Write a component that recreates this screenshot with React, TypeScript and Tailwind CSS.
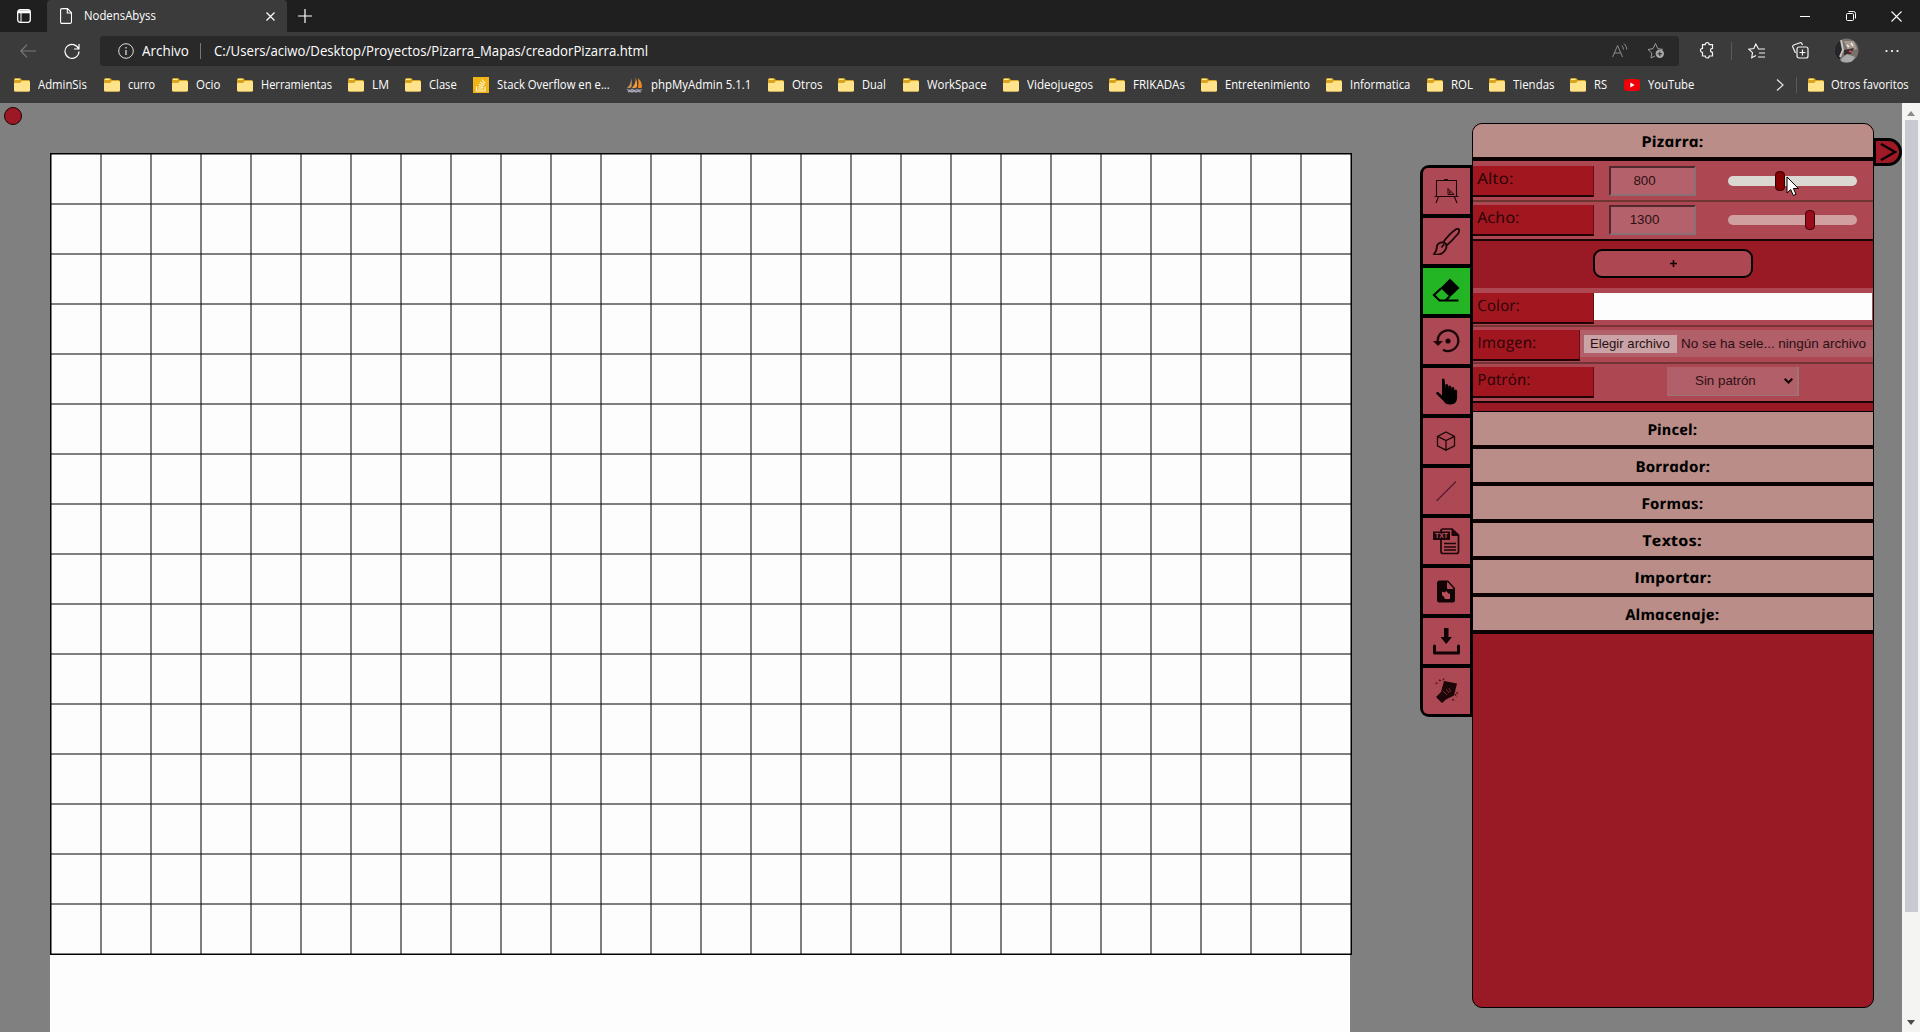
import { useLayoutEffect, useRef, useState } from "react";
import type { ReactNode } from "react";

/* Text line squeezed or stretched to a given width */
function Fit({ w, upright, children }: { w: number; upright?: boolean; children: ReactNode }) {
  const ref = useRef<HTMLSpanElement>(null);
  const [scale, setScale] = useState(1);
  useLayoutEffect(() => {
    if (ref.current) setScale(w / ref.current.offsetWidth);
  }, [w]);
  return (
    <span className="inline-flex shrink-0 whitespace-nowrap" style={{ width: w }}>
      <span
        ref={ref}
        className="inline-block origin-left shrink-0"
        style={{ transform: `scaleX(${scale})${upright ? " skewX(11deg)" : ""}` }}
      >
        {children}
      </span>
    </span>
  );
}

const Folder = () => (
  <svg className="shrink-0" width="16" height="16" viewBox="0 0 16 16">
    <path d="M0 2.500Q0 1 1.500 1H6l2 2h6.500Q16 3 16 4.500V13q0 1.500-1.500 1.500h-13Q0 14.500 0 13z" fill="#d9a520" />
    <path d="M0 6h6l2-2h6.500Q16 4 16 5.500V13q0 1.500-1.500 1.500h-13Q0 14.500 0 13z" fill="#ffe38a" />
    <path d="M1 2.500h4.500" stroke="#fff0a0" />
  </svg>
);
const Stack = () => (
  <svg className="shrink-0" width="16" height="16" viewBox="0 0 16 16">
    <rect width="16" height="16" fill="#f0b416" />
    <path d="M3.500 9.500v4.500h8.500V9.500M5.200 12h5M5.300 9.800l5 .6M5.800 7.400l4.800 1.300M7 5l4.400 2.500M8.800 2.500l3.400 3.700" stroke="#fff6d8" strokeWidth="1.100" fill="none" />
  </svg>
);
const Sails = () => (
  <svg className="shrink-0" width="17" height="16" viewBox="0 0 17 16">
    <path d="M5 1Q5.500 7 1 11q3 .5 4.500-1Q6.500 5 5 1z" fill="#c9955e" />
    <path d="M9.500 0Q10.500 6 6 11q4 .5 5-1 .5-6-1.500-10z" fill="#f39a3c" />
    <path d="M12 1q5 5 3.500 10h-3.500q1-5 0-10z" fill="#f08a1c" />
    <path d="M1 12.500q3 2 5 0 2 2 5 0 2 1.500 5 0M2 15q2-1.500 4 0 2-1.500 4 0 2-1.500 5 0" stroke="#a5a5b5" strokeWidth="1.300" fill="none" />
  </svg>
);
const YouTube = () => (
  <svg className="shrink-0" width="16" height="16" viewBox="0 0 16 16">
    <rect y="2" width="16" height="12" rx="3" fill="#f00008" />
    <path d="M6.300 5.500v5L10.600 8z" fill="#fff" />
  </svg>
);

const bookmarks: { label: string; step: number; w: number; icon?: ReactNode }[] = [
  { label: "AdminSis", step: 90, w: 49 },
  { label: "curro", step: 68, w: 27 },
  { label: "Ocio", step: 65, w: 24 },
  { label: "Herramientas", step: 111, w: 71 },
  { label: "LM", step: 57, w: 17 },
  { label: "Clase", step: 68, w: 28 },
  { label: "Stack Overflow en e...", step: 153, w: 113, icon: <Stack /> },
  { label: "phpMyAdmin 5.1.1", step: 142, w: 100, icon: <Sails /> },
  { label: "Otros", step: 70, w: 30 },
  { label: "Dual", step: 65, w: 24 },
  { label: "WorkSpace", step: 100, w: 60 },
  { label: "Videojuegos", step: 106, w: 66 },
  { label: "FRIKADAs", step: 92, w: 52 },
  { label: "Entretenimiento", step: 125, w: 85 },
  { label: "Informatica", step: 101, w: 60 },
  { label: "ROL", step: 62, w: 22 },
  { label: "Tiendas", step: 81, w: 41 },
  { label: "RS", step: 54, w: 13 },
  { label: "YouTube", step: 152, w: 46, icon: <YouTube /> },
];

function TitleBar() {
  return (
    <div className="flex h-8 shrink-0 items-stretch bg-[#1f1f20]">
      <div className="flex w-[47px] items-center pl-[17px]">
        <svg width="14" height="14" viewBox="0 0 14 14" fill="none" stroke="#fff">
          <rect x=".7" y=".7" width="12.600" height="12.600" rx="2.500" strokeWidth="1.300" />
          <path d="M1 2.800h12" strokeWidth="3" />
          <path d="M4 4v9" strokeWidth="1" />
        </svg>
      </div>
      <div className="flex w-60 items-center rounded-t-[4px] bg-[#3b3b3b] pl-[13px] text-[12px] text-white">
        <svg width="12" height="16" viewBox="0 0 12 16" fill="none" stroke="#fff" strokeWidth="1.100">
          <path d="M2 .6h5.500l4 4.200V14q0 1.400-1.400 1.400H2Q.6 15.400.6 14V2Q.6.6 2 .6zM7.300.8v4.200h4" />
        </svg>
        <span className="ml-3 flex"><Fit w={72}>NodensAbyss</Fit></span>
        <svg className="ml-[110px]" width="9" height="9" viewBox="0 0 9 9" stroke="#fff" strokeWidth="1.200">
          <path d="M.5.5l8 8M8.500.5l-8 8" />
        </svg>
      </div>
      <div className="flex flex-1 items-center pl-[11px]">
        <svg width="14" height="14" viewBox="0 0 14 14" stroke="#fff" strokeWidth="1.200"><path d="M0 7h14M7 0v14" /></svg>
      </div>
      <div className="flex w-[120px] items-center">
        <svg width="10" height="10" viewBox="0 0 10 10" stroke="#fff"><path d="M0 5.500h10" /></svg>
        <svg className="ml-9" width="10" height="10" viewBox="0 0 10 10" fill="none" stroke="#fff">
          <rect x=".5" y="2.500" width="7" height="7" rx="1" />
          <path d="M2.500 .5h5q2 0 2 2v5" />
        </svg>
        <svg className="ml-[35px]" width="11" height="11" viewBox="0 0 11 11" stroke="#fff" strokeWidth="1.100"><path d="M.5.5l10 10M10.500.5l-10 10" /></svg>
      </div>
    </div>
  );
}

function AddressBar() {
  return (
    <div className="flex h-[37px] shrink-0 items-center bg-[#3b3b3b] pl-5">
      <svg width="16" height="14" viewBox="0 0 16 14" fill="none" stroke="#7b7b7b" strokeWidth="1.100"><path d="M16 7H1M7 .7L.8 7 7 13.300" /></svg>
      <svg className="ml-7" width="16" height="16" viewBox="0 0 16 16" fill="none" stroke="#fff" strokeWidth="1.200">
        <path d="M14.600 6A7 7 0 1 0 15 8.500M15 1v5h-5" />
      </svg>
      <div className="ml-5 flex h-[30px] w-[1579px] items-center rounded-[3px] bg-[#29292a] pl-[18px] text-[14px] text-white">
        <svg width="16" height="16" viewBox="0 0 16 16" fill="none" stroke="#ddd"><circle cx="8" cy="8" r="7.300" /><path d="M8 7v5" strokeWidth="1.300" /><path d="M8 4v1.500" strokeWidth="1.300" /></svg>
        <span className="ml-2 flex"><Fit w={47}>Archivo</Fit></span>
        <span className="ml-[11px] h-4 w-px bg-[#777]" />
        <span className="ml-[13px] flex"><Fit w={434}>C:/Users/aciwo/Desktop/Proyectos/Pizarra_Mapas/creadorPizarra.html</Fit></span>
        <svg className="ml-auto" width="16" height="15" viewBox="0 0 16 15" fill="none" stroke="#8c8c8c">
          <path d="M.6 14L5.600 2.500 10.500 14M2.400 10h6.300M9.800 2.500q1.600 1.500 1.600 4M12 .6q2.800 2.400 2.800 6" />
        </svg>
        <svg className="ml-[19px] mr-3.5" width="18" height="17" viewBox="0 0 18 17" fill="none" stroke="#9b9b9b">
          <path d="M8 14l-4 2 .8-5L1 7.500l5-.8L8.500 1.500l2.300 5.200 5.200.7" />
          <circle cx="12.800" cy="11.800" r="4.200" fill="#a8a8a8" stroke="none" />
          <path d="M12.800 9.500v4.600M10.500 11.800h4.600" stroke="#29292a" />
        </svg>
      </div>
      <svg className="ml-[20px] mr-px" width="16" height="17" viewBox="0 0 16 17" fill="none" stroke="#f4f4f4" strokeWidth="1.200">
        <path d="M3 3.200h2.700a2 2 0 0 1 4 0H13v3.600a1.900 1.900 0 0 0 0 4V14.500H9.700a2 2 0 0 1-4 0H3v-3.600a2 2 0 0 1 0-4z" transform="translate(.5 -.5)" />
      </svg>
      <span className="ml-[15px] h-[18px] w-px bg-[#5a5a5a]" />
      <svg className="ml-4" width="17" height="16" viewBox="0 0 17 16" fill="none" stroke="#f4f4f4" strokeWidth="1.100">
        <path d="M10.300 5.500L7.800 1 5.800 5.500.8 6.200l3.700 3.500-.8 5.100L8 12.500M10 6h7M11 10h6M10 14h7" />
      </svg>
      <svg className="ml-[27px]" width="17" height="17" viewBox="0 0 17 17" fill="none" stroke="#f4f4f4" strokeWidth="1.200">
        <rect x="5" y="5" width="11" height="11" rx="2" />
        <path d="M10.500 7.500v6M7.500 10.500h6M3.500 11L.8 5Q.3 3.500 1.800 3L8 .8q1.500-.5 2 1l.5 1.200" />
      </svg>
      <svg className="ml-[25px]" width="25" height="25" viewBox="0 0 25 25">
        <defs><clipPath id="avatar"><circle cx="12.500" cy="12.500" r="12" /></clipPath></defs>
        <g clipPath="url(#avatar)">
          <rect width="25" height="25" fill="#77706c" />
          <path d="M0 6l7-5 2 14-4 8-5-4z" fill="#25252a" />
          <path d="M7 2l2 10-3 7" stroke="#c7c2bd" strokeWidth="2" fill="none" />
          <path d="M10 3h10l3 8-9 2z" fill="#a79a92" />
          <path d="M10 12l10-2-3 6-7 1z" fill="#3a2c30" />
          <path d="M13 7l2 2M17 5l2 3" stroke="#eee" strokeWidth="1.500" />
          <path d="M7 21l6-5 8 3-4 6H8z" fill="#a8abaa" />
          <path d="M15 13l3 1" stroke="#c0504c" strokeWidth="2" />
        </g>
      </svg>
      <svg className="ml-[26px]" width="14" height="4" viewBox="0 0 14 4" fill="#fff"><circle cx="1.500" cy="2" r="1.100" /><circle cx="7" cy="2" r="1.100" /><circle cx="12.500" cy="2" r="1.100" /></svg>
    </div>
  );
}

function Bookmarks() {
  return (
    <div className="flex h-[34px] shrink-0 items-center bg-[#3b3b3b] pl-3.5 pb-[3px] text-[12px] text-white">
      {bookmarks.map((b) => (
        <div key={b.label} className="flex shrink-0 items-center gap-2" style={{ width: b.step }}>
          {b.icon ?? <Folder />}
          <Fit w={b.w}>{b.label}</Fit>
        </div>
      ))}
      <svg className="shrink-0" width="8" height="12" viewBox="0 0 8 12" fill="none" stroke="#ddd" strokeWidth="1.300"><path d="M1 .5L7 6l-6 5.500" /></svg>
      <span className="ml-3 mr-[11px] h-4 w-px shrink-0 bg-[#5a5a5a]" />
      <Folder />
      <span className="ml-[7px] flex"><Fit w={78}>Otros favoritos</Fit></span>
    </div>
  );
}

const columns = Array.from({ length: 27 }, (_, i) => i * 50);
const lines = Array.from({ length: 17 }, (_, i) => i * 50);

function Board() {
  return (
    <div className="mt-[50px] h-[879px] w-[1302px]">
      <div className="h-[802px] w-[1302px] border border-black bg-[#fdfdfd]">
        <svg width="1300" height="800" viewBox="0 0 1300 800" stroke="#000" strokeWidth="1">
          {columns.map((x) => <path key={x} d={`M${x} 0V800`} />)}
          {lines.map((y) => <path key={y} d={`M0 ${y}H1300`} />)}
        </svg>
      </div>
      <div className="h-[77px] w-[1300px] bg-[#fdfdfd]" />
    </div>
  );
}

const I = ({ children }: { children: ReactNode }) => (
  <svg width="28" height="28" viewBox="0 0 28 28" fill="none" stroke="#1c0608">{children}</svg>
);

const tools: ReactNode[] = [
  <I><path d="M4 3.500h21M4.500 3.500v16M24.500 3.500v16M2.500 19.500h24M12 2.500h4M6.500 20L4 26M22.500 20l2.500 6" strokeWidth="1.100" /><path d="M16 11.500v6h6zM17.500 14.500v1.500H19" strokeWidth="1" /></I>,
  <I><path d="M11 15.500Q17 7 24 2.200q2.500-1 3.300 1-.2 2.500-1.500 3.800Q20 14 14.500 18.500M11 15.500q3 .5 3.500 3M11 15.500q-4-.5-6 3 .2 5-3 8.500 5 1.500 8.500-1 4-3 4-7.500M9.500 20.500q1-2 2.800-3" strokeWidth="1.800" /></I>,
  <I><path d="M8.500 11L18 1.500 27.500 11 18 20z" fill="#000" stroke="none" /><path d="M9 11.500L2 18l5.500 5.500H26.500M17.500 19.500l-4 4" stroke="#000" strokeWidth="2.200" /></I>,
  <I><path d="M5.800 15A10.300 10.300 0 1 1 11 22.700" strokeWidth="2.300" /><path d="M1 14h10l-5 5z" fill="#1c0608" stroke="none" /><circle cx="16" cy="14" r="2.600" fill="#1c0608" stroke="none" /></I>,
  <I><path d="M10 2q1.700-1 2.600.5L13.300 12V7.500q1.700-1 2.700.5l.4 5V9q1.700-1 2.700.5l.4 4.500v-3.500q1.700-1 2.700.5l.5 4V13q1.800-1 2.400.8V21q-.5 6.500-6.500 6.500-5 .3-7-3.500L4 16.500q.2-2 2-1.500l4 3.500z" fill="#000" stroke="none" /></I>,
  <I><path d="M14 5l8.500 4.300v9.500L14 23.200l-8.500-4.400V9.300zM5.500 9.300L14 13.600l8.500-4.300M14 13.600v9.600" strokeWidth="1.300" /></I>,
  <I><path d="M4.500 24L24 4.500" stroke="#5a1a35" strokeWidth="1.200" /></I>,
  <I>
    <path d="M9 8V4q0-2 2-2h9l6.500 6v16.500q0 2-2 2H11q-2 0-2-2V13" strokeWidth="1.700" /><path d="M20 2v6.500h6z" fill="#1c0608" />
    <path d="M12 16.500h12M12 20h12M12 23h12" strokeWidth="1.600" />
    <rect x="1" y="4.500" width="17" height="8.500" fill="#1c0608" stroke="none" />
    <text x="3" y="11.300" fontSize="7" fontFamily="Liberation Sans" fontWeight="bold" fill="#b85560" stroke="none" textLength="13">TXT</text>
  </I>,
  <I><path d="M7.500 3.500H16L23 11v12q0 2.500-2.500 2.500h-13Q5 25.500 5 23V6q0-2.500 2.500-2.500z" fill="#120305" stroke="none" /><path d="M15.500 5.500v6H21z" fill="#b04a55" stroke="#b04a55" /><path d="M10 14.500l2.500 1 1.500-1.500 3 3 1-1v6h-6l1-1-3-3z" fill="#b8505c" stroke="none" /></I>,
  <I><path d="M12 1h4.500v9H20l-5.800 7L8.500 10H12z" fill="#120305" stroke="none" /><path d="M2.500 19v7h24v-7" stroke="#120305" strokeWidth="3" strokeLinejoin="round" strokeLinecap="round" /></I>,
  <I><path d="M12 4l13 2.500-3 12-8 4-4 3.500-6-6 5-5z" fill="#1c0608" stroke="none" /><path d="M11 14l4 4M14 12l3 4M17 11l2 4" stroke="#7a2a30" /><path d="M3.500 6.500l3-1M7 3l2 1M12 1.500l-1 2M23 17l1.500 3M20 22.500l3 1M25 15l.5 3" stroke="#5a1218" strokeWidth="1.500" strokeDasharray="2 1" /></I>,
];

function Toolbar() {
  return (
    <div className="mt-[62px] flex h-[552px] w-[52px] flex-col gap-1 rounded-l-[9px] bg-black pt-[3px] pl-[3px]">
      {tools.map((t, i) => (
        <div
          key={i}
          className={
            "flex h-[46px] w-[47px] shrink-0 items-center justify-center pr-px " +
            (i === 2 ? "bg-[#23b524]" : "bg-[#ad4954]") + (i === 0 ? " rounded-tl-[5px]" : i === 10 ? " rounded-bl-[5px]" : "")
          }
        >
          {t}
        </div>
      ))}
    </div>
  );
}

function Header({ w, children }: { w: number; children: string }) {
  return (
    <div className="flex h-[37px] items-center justify-center border-b-4 border-[#0c0203] bg-[#bb8d88] pt-0.5 pr-0.5 text-[15px] font-bold text-black italic">
      <Fit w={w} upright>{children}</Fit>
    </div>
  );
}

function Label({ w, narrow, children }: { w: number; narrow?: boolean; children: string }) {
  return (
    <div
      className={
        "flex h-[31px] shrink-0 items-center border-b-2 border-r border-b-[#200205] border-r-[#6b0c12] bg-[#a2171f] pb-1 pl-1 text-[15.500px] font-medium text-[#2c0407] italic " +
        (narrow ? "w-[107px]" : "w-[121px]")
      }
    >
      <Fit w={w} upright>{children}</Fit>
    </div>
  );
}

function NumberBox({ children }: { children: string }) {
  return (
    <div className="ml-[15px] flex h-[30px] w-[87px] items-center justify-center border-2 border-t-[#50282e] border-r-[#8a7076] border-b-[#8a7076] border-l-[#50282e] bg-[#b4616b] pr-4 font-['Liberation_Sans',sans-serif] text-[13.33px] text-[#2c1013]">
      {children}
    </div>
  );
}

function Panel() {
  return (
    <div className="mt-5 h-[885px] w-[402px] overflow-hidden rounded-[10px] border border-black bg-[#991a25]">
      <Header w={62}>Pizarra:</Header>
      <div className="flex h-[41px] border-b-2 border-[#6f3530] bg-[#ad4752] pt-[5px]">
        <Label w={36}>Alto:</Label>
        <NumberBox>800</NumberBox>
        <div className="mt-2.5 ml-8 flex h-2.5 w-[129px] items-center rounded-full bg-[#dbd8d2] pl-[47px]">
          <span className="h-5 w-2.5 shrink-0 rounded-[4px] border border-[#300] bg-[#850003]" />
        </div>
      </div>
      <div className="flex h-[39px] border-b-2 border-[#1a0305] bg-[#ad4752] pt-[3px]">
        <Label w={42}>Acho:</Label>
        <NumberBox>1300</NumberBox>
        <div className="mt-2.5 ml-8 flex h-2.5 w-[129px] items-center rounded-full bg-[#cfa09f] pl-[77px]">
          <span className="h-5 w-2.5 shrink-0 rounded-[4px] border border-[#400208] bg-[#9a0c1c]" />
        </div>
      </div>
      <div className="flex h-[47px] justify-center pt-2">
        <div className="flex h-[29px] w-[160px] items-center justify-center rounded-[9px] border-2 border-black bg-[#ad4752]">
          <svg width="7" height="7" viewBox="0 0 7 7" stroke="#150205" strokeWidth="1.600"><path d="M0 3.500h7M3.500 0v7" /></svg>
        </div>
      </div>
      <div className="flex h-[39px] border-b-2 border-[#7a3436] bg-[#ad4752] pt-[5px]">
        <Label w={43}>Color:</Label>
        <div className="h-[27px] w-[278px] bg-[#fdfdfd]" />
      </div>
      <div className="flex h-[37px] border-b-2 border-[#6f3436] bg-[#ad4752] pt-[3px]">
        <Label w={59} narrow>Imagen:</Label>
        <div className="flex h-[27px] flex-1 items-center bg-[#b15f69] pl-1 font-['Liberation_Sans',sans-serif] text-[13.33px] text-[#2a1013]">
          <div className="flex h-[18px] w-[93px] items-center justify-center bg-[#c9a3a5] pr-px"><Fit w={80}>Elegir archivo</Fit></div>
          <span className="ml-1 flex"><Fit w={185}>No se ha sele... ningún archivo</Fit></span>
        </div>
      </div>
      <div className="flex h-[39px] border-b-2 border-[#1a0305] bg-[#ad4752] pt-[3px]">
        <Label w={53}>Patrón:</Label>
        <div className="ml-[73px] flex h-[29px] w-[132px] items-center border-r-2 border-b border-[#99757a] bg-[#b15f68] pl-[28px] font-['Liberation_Sans',sans-serif] text-[13.33px] text-[#2e1014]">
          <Fit w={61}>Sin patrón</Fit>
          <svg className="ml-[28px]" width="9" height="6" viewBox="0 0 9 6" fill="none" stroke="#120304" strokeWidth="2"><path d="M.7.7l3.800 3.800L8.300.7" /></svg>
        </div>
      </div>
      <div className="h-[9px] border-b border-black" />
      <Header w={50}>Pincel:</Header>
      <Header w={75}>Borrador:</Header>
      <Header w={62}>Formas:</Header>
      <Header w={60}>Textos:</Header>
      <Header w={77}>Importar:</Header>
      <Header w={94}>Almacenaje:</Header>
    </div>
  );
}

function Scrollbar() {
  return (
    <div className="flex h-[929px] w-[18px] flex-col items-center bg-[#f4f4f3]">
      <svg className="mt-2" width="8" height="5" viewBox="0 0 8 5" fill="#8a8a8a"><path d="M0 5l4-5 4 5z" /></svg>
      <div className="mt-1 h-[792px] w-[13px] bg-[#c9c9d2]" />
      <svg className="mt-auto mb-[7px]" width="8" height="5" viewBox="0 0 8 5" fill="#4a4a4a"><path d="M0 0l4 5 4-5z" /></svg>
    </div>
  );
}

export default function App() {
  return (
    <div className="flex h-[1032px] w-[1920px] flex-col overflow-hidden bg-[#808080] font-['Open_Sans',sans-serif] leading-none">
      <TitleBar />
      <AddressBar />
      <Bookmarks />
      <div className="relative flex flex-1 items-start">
        <div className="mt-1 ml-1 h-[18px] w-[18px] rounded-full border border-[#200] bg-[#9b1824]" />
        <div className="ml-7"><Board /></div>
        <div className="ml-[68px]"><Toolbar /></div>
        <Panel />
        <div className="mt-[35px] flex h-7 w-7 items-center rounded-r-full border-[3px] border-l-2 border-black bg-[#a01927] pl-1">
          <svg width="17" height="18" viewBox="0 0 17 18" fill="none" stroke="#080203" strokeWidth="2.500"><path d="M1 1l14 8-14 8" /></svg>
        </div>
        <Scrollbar />
        <svg className="absolute top-[73px] left-[1786px]" width="14" height="21" viewBox="0 0 14 21" fill="#fff" stroke="#000">
          <path d="M1 1v16l3.700-3.500 2.600 6 2.700-1.200-2.600-5.800h5z" />
        </svg>
      </div>
    </div>
  );
}
